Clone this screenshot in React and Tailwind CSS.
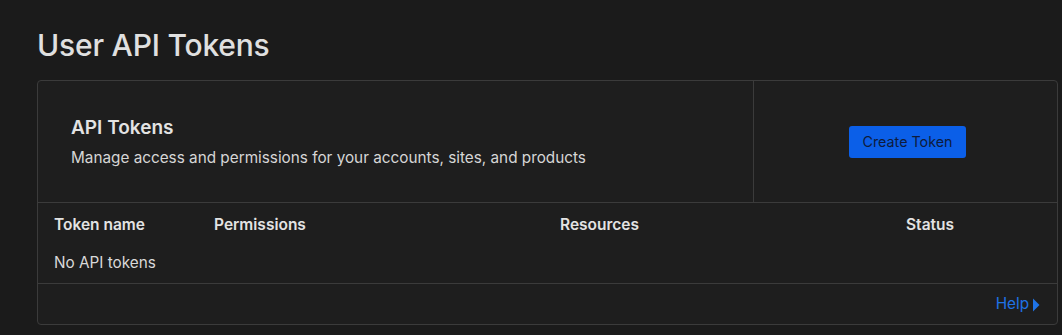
import React from 'react';

export default function App() {
  const columns = [
    { label: 'Token name', width: 'w-[160px]' },
    { label: 'Permissions', width: 'w-[346px]' },
    { label: 'Resources', width: 'w-[346px]' },
    { label: 'Status', width: 'flex-1' },
  ];

  return (
    <div className="min-h-[335px] bg-[#1b1b1b] px-[37px] pt-[26px] font-['Inter',sans-serif] text-[#e3e3e3]">
      <h1 className="text-[30px] font-medium leading-[38px] tracking-[-0.2px] text-[#e0e0e0]">User API Tokens</h1>

      <div className="mt-[16px] mr-[-33px] rounded-[4px] border border-[#3b3b3b] bg-[#1e1e1e]">
        <div className="flex h-[122px] border-b border-[#3b3b3b]">
          <div className="flex flex-1 flex-col justify-center pl-[33px]">
            <h2 className="text-[19px] font-semibold leading-[24px] text-[#e3e3e3]">API Tokens</h2>
            <p className="mt-[8px] text-[15.3px] leading-[20px] text-[#d6d6d6]">
              Manage access and permissions for your accounts, sites, and products
            </p>
          </div>
          <div className="flex w-[304px] items-center justify-center border-l border-[#3b3b3b] pl-[4px]">
            <button className="h-[32px] w-[117px] rounded-[3px] bg-[#0b5fe8] text-[14.3px] text-[#0e1b3c]">
              Create Token
            </button>
          </div>
        </div>

        <div className="px-[16px]">
          <div className="flex h-[42px] items-center pt-[1px]">
            {columns.map(col => (
              <div key={col.label} className={`${col.width} text-[15.5px] font-semibold text-[#e3e3e3]`}>
                {col.label}
              </div>
            ))}
          </div>
          <div className="flex h-[38px] items-center pb-[2px] text-[15.3px] text-[#d9d9d9]">No API tokens</div>
        </div>

        <div className="flex h-[41px] items-center justify-end border-t border-[#3b3b3b] pr-[17px]">
          <a className="flex items-center gap-[3px] text-[15.3px] text-[#1f73e6]">
            Help
            <svg width="8" height="14" viewBox="0 0 8 14" className="mt-[1px]">
              <path d="M1 0.5 L7.5 7 L1 13.5 Z" fill="#1f73e6" />
            </svg>
          </a>
        </div>
      </div>
    </div>
  );
}
